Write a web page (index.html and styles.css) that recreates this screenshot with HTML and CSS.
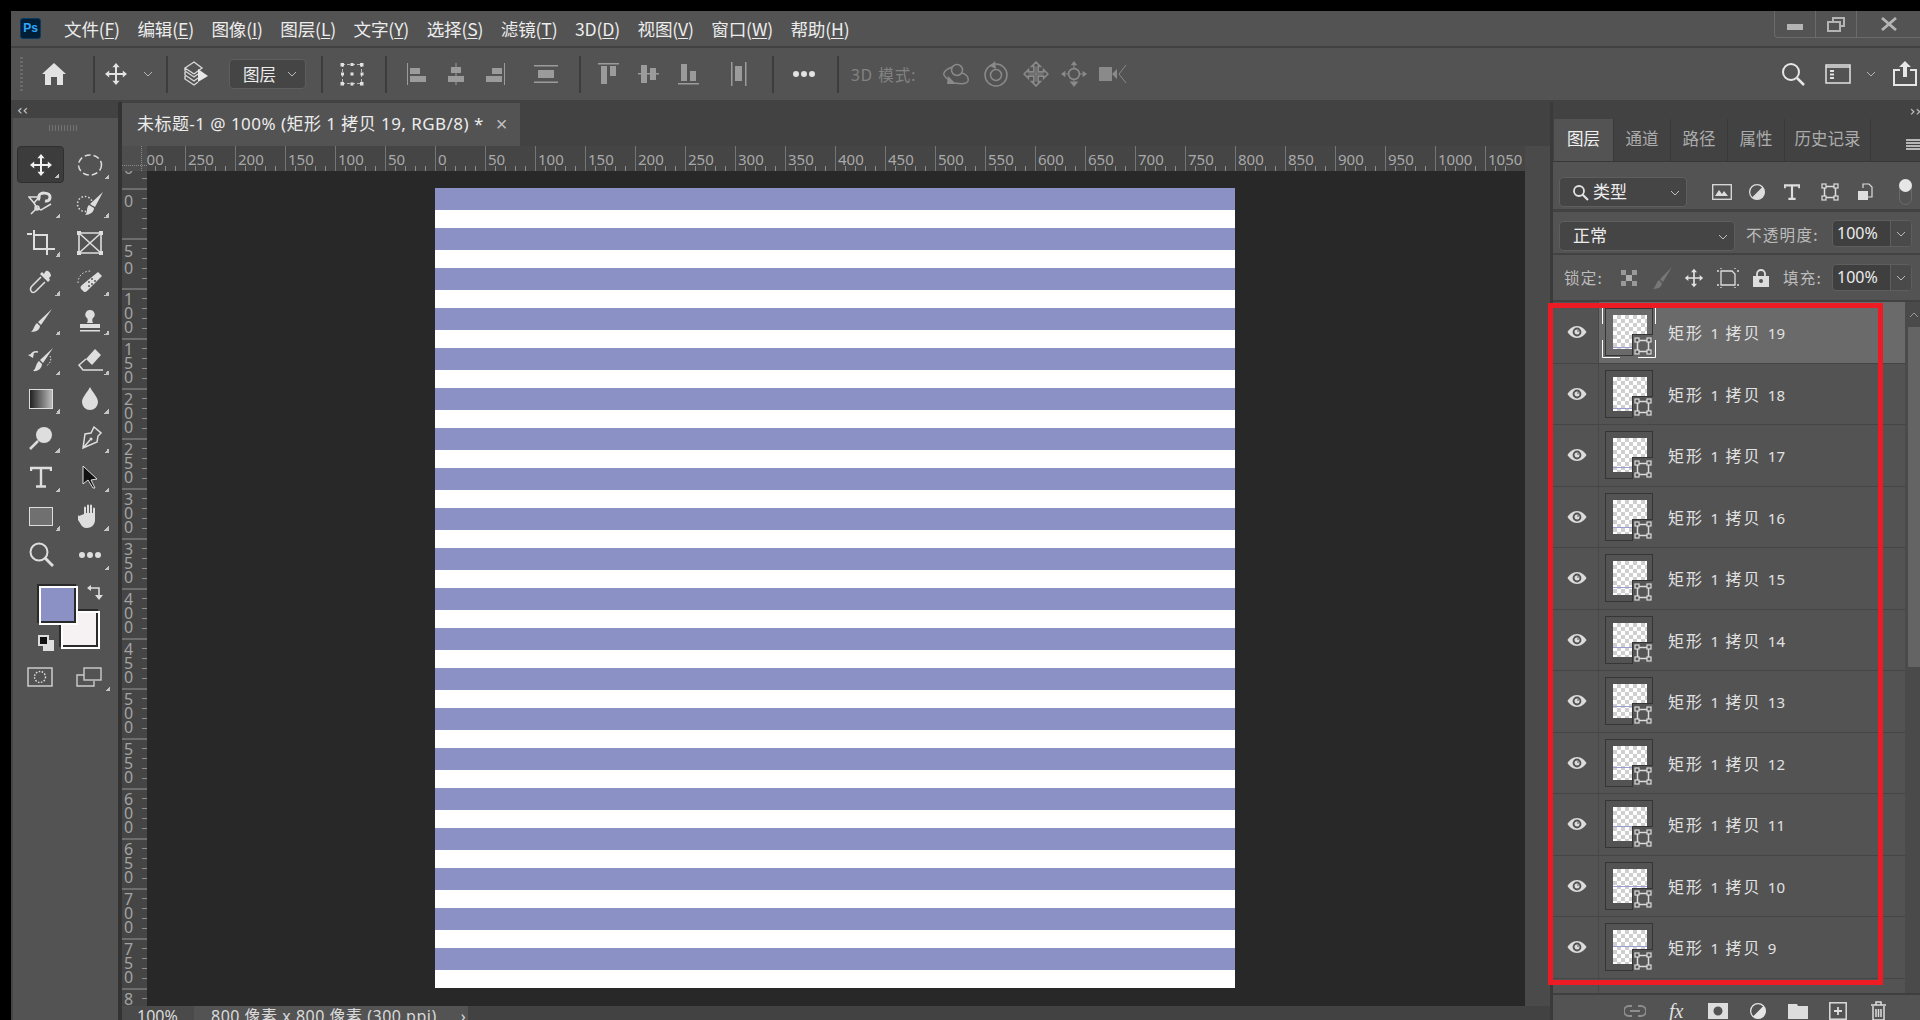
FILE: index.html
```html
<!DOCTYPE html>
<html lang="zh-CN">
<head>
<meta charset="utf-8">
<title>Photoshop</title>
<link rel="stylesheet" href="styles.css">
</head>
<body>
<svg class="defs" aria-hidden="true">
  <symbol id="move" viewBox="0 0 24 24"><path fill="currentColor" d="M12 1l3.6 4.2H13V11h5.8V8.4L23 12l-4.2 3.6V13H13v5.8h2.6L12 23l-3.6-4.2H11V13H5.2v2.6L1 12l4.2-3.6V11H11V5.2H8.4z"/></symbol>
  <symbol id="chev" viewBox="0 0 12 8"><path fill="none" stroke="currentColor" stroke-width="1" d="M2 2l4 4 4-4"/></symbol>
  <symbol id="eye" viewBox="0 0 20 14"><path fill="currentColor" fill-rule="evenodd" d="M10 1c4.500 0 8 3.500 9.500 6-1.500 2.500-5 6-9.500 6S2 9.500.5 7C2 4.500 5.500 1 10 1zm0 1.600a4.400 4.400 0 1 0 0 8.800 4.400 4.400 0 0 0 0-8.800zM10 4.500a2.500 2.500 0 1 1 0 5 2.500 2.500 0 0 1 0-5zm1 .8a.8.8 0 1 0 0 1.600.8.800 0 0 0 0-1.600z"/></symbol>
  <symbol id="shape" viewBox="0 0 18 18"><g fill="none" stroke="currentColor"><rect x="3.500" y="3.500" width="11" height="11" stroke-width="1.500"/><rect x="1" y="1" width="4" height="4" fill="#555" stroke-width="1.200"/><rect x="13" y="1" width="4" height="4" fill="#555" stroke-width="1.200"/><rect x="1" y="13" width="4" height="4" fill="#555" stroke-width="1.200"/><rect x="13" y="13" width="4" height="4" fill="#555" stroke-width="1.200"/></g></symbol>
  <symbol id="adjust" viewBox="0 0 20 20"><circle cx="10" cy="10" r="8.200" fill="none" stroke="currentColor" stroke-width="1.400"/><path fill="currentColor" d="M16 4.500A8 8 0 0 1 4.500 16z"/></symbol>
</svg>

<div class="app">
  <header class="menubar">
    <div class="logo">Ps</div>
    <nav class="menu">
      <span>文件(<u>F</u>)</span><span>编辑(<u>E</u>)</span><span>图像(<u>I</u>)</span><span>图层(<u>L</u>)</span><span>文字(<u>Y</u>)</span><span>选择(<u>S</u>)</span><span>滤镜(<u>T</u>)</span><span>3D(<u>D</u>)</span><span>视图(<u>V</u>)</span><span>窗口(<u>W</u>)</span><span>帮助(<u>H</u>)</span>
    </nav>
    <div class="winctl">
      <div class="wc wc-min"><svg width="16" height="6" viewBox="0 0 16 6"><rect y="0" width="16" height="6" fill="#b4b4b4"/></svg></div>
      <div class="wc wc-res"><svg width="18" height="15" viewBox="0 0 18 15"><path fill="none" stroke="#b4b4b4" stroke-width="2" d="M6 4V1h11v8h-4M1 5h12v9H1z"/></svg></div>
      <div class="wc wc-close"><svg width="16" height="14" viewBox="0 0 16 14"><path fill="none" stroke="#b4b4b4" stroke-width="2.800" d="M1 1l14 12M15 1L1 13"/></svg></div>
    </div>
  </header>

  <div class="optbar">
    <i class="grip"></i>
    <div class="ic m11"><svg width="26" height="24" viewBox="0 0 26 24"><path fill="#e2e2e2" d="M13 1l12 11h-3v11h-6v-8h-6v8H4V12H1z"/></svg></div>
    <i class="sep m19"></i>
    <div class="ic m1"><svg width="24" height="24"><use href="#move"/></svg></div>
    <div class="chev m4"><svg width="12" height="8"><use href="#chev"/></svg></div>
    <i class="sep m10"></i>
    <div class="ic m8"><svg width="26" height="26" viewBox="0 0 26 26"><g fill="none" stroke="#d8d8d8" stroke-width="1.400"><path d="M2 7l9-6 8 6-8 6zM2 7v3l9 6 4-3M2 11v3l9 6 4-3M2 15v3l9 6 4-3"/></g><path fill="#e8e8e8" d="M15 8l10 7-10 6z"/></svg></div>
    <div class="tselect m13"><span>图层</span><svg width="12" height="8"><use href="#chev"/></svg></div>
    <i class="sep m15"></i>
    <div class="ic m9"><svg width="26" height="26" viewBox="0 0 26 26"><path fill="none" stroke="#b8b8b8" stroke-dasharray="3 2" d="M3 3.500h20M3 22.500h20M3.500 3v20M22.500 3v20"/><g fill="#e2e2e2"><rect x="1.500" y="2" width="3.500" height="3.500"/><rect x="11.500" y="2" width="3" height="3"/><rect x="21" y="2" width="3.500" height="3.500"/><rect x="2" y="11.500" width="3" height="3"/><rect x="11.500" y="11.500" width="3" height="3"/><rect x="21.500" y="11.500" width="3" height="3"/><rect x="1.500" y="21" width="3.500" height="3.500"/><rect x="11.500" y="21.500" width="3" height="3"/><rect x="21" y="21" width="3.500" height="3.500"/></g></svg></div>
    <i class="sep m13"></i>
    <div class="ic off m9"><svg width="20" height="24" viewBox="0 0 20 24"><path fill="currentColor" d="M1 1h1v22H1zM4 6h10v6H4zM4 14h16v6H4z"/></svg></div>
    <div class="ic off"><svg width="20" height="24" viewBox="0 0 20 24"><path fill="currentColor" d="M9.500 1h1v22h-1zM5 5h10v6H5zM2 14h16v6H2z"/></svg></div>
    <div class="ic off"><svg width="20" height="24" viewBox="0 0 20 24"><path fill="currentColor" d="M18 1h1v22h-1zM6 6h10v6H6zM0 14h16v6H0z"/></svg></div>
    <div class="ic off m10"><svg width="26" height="20" viewBox="0 0 26 20"><path fill="currentColor" d="M1 1h24v1.500H1zM1 17.500h24V19H1zM5 6h16v8H5z"/></svg></div>
    <i class="sep m13"></i>
    <div class="ic off m8"><svg width="22" height="24" viewBox="0 0 22 24"><path fill="currentColor" d="M0 1h21v1.500H0zM3 4h6v18H3zM12 4h6v10h-6z"/></svg></div>
    <div class="ic off"><svg width="22" height="24" viewBox="0 0 22 24"><path fill="currentColor" d="M0 11h21v1.500H0zM3 3h6v18H3zM12 6h6v12h-6z"/></svg></div>
    <div class="ic off"><svg width="22" height="24" viewBox="0 0 22 24"><path fill="currentColor" d="M0 21h21v1.500H0zM3 2h6v17H3zM12 9h6v10h-6z"/></svg></div>
    <div class="ic off m10"><svg width="16" height="26" viewBox="0 0 16 26"><path fill="currentColor" d="M0 1h1.500v24H0zM14 1h1.500v24H14zM4 5h7v15H4z"/></svg></div>
    <i class="sep m13"></i>
    <div class="ic m10"><svg width="24" height="8" viewBox="0 0 24 8"><circle cx="4" cy="4" r="3" fill="#e2e2e2"/><circle cx="12" cy="4" r="3" fill="#e2e2e2"/><circle cx="20" cy="4" r="3" fill="#e2e2e2"/></svg></div>
    <i class="sep m13"></i>
    <div class="mode3d m12">3D 模式:</div>
    <div class="ic dim m15"><svg width="28" height="24" viewBox="0 0 28 24"><g fill="none" stroke="currentColor" stroke-width="1.500"><circle cx="15" cy="8" r="5.500"/><path d="M10 5C5 7 1 10 2 13c1 2 3 4 5 5M20 11c4 1 7 4 6 8-1 3-7 3-13 2"/></g><path fill="currentColor" d="M6 14l8 8H5z"/></svg></div>
    <div class="ic dim"><svg width="26" height="26" viewBox="0 0 26 26"><g fill="none" stroke="currentColor" stroke-width="1.500"><circle cx="13" cy="14" r="11"/><circle cx="13" cy="14" r="5.500"/></g><path fill="currentColor" d="M12 0l-5 5 6 3z"/></svg></div>
    <div class="ic dim"><svg width="26" height="26" viewBox="0 0 24 24"><path fill="none" stroke="currentColor" stroke-width="1.500" d="M12 1l4 4h-2v5h5V8l4 4-4 4v-2h-5v5h2l-4 4-4-4h2v-5H5v2l-4-4 4-4v2h5V5H8z"/><path fill="none" stroke="currentColor" d="M12 5v14M5 12h14"/></svg></div>
    <div class="ic dim nudge2"><svg width="26" height="26" viewBox="0 0 24 24"><path fill="currentColor" d="M12 0l3 4H9zM12 24l-4-5h8zM0 12l4-3v6zM24 12l-4-3v6z"/><circle cx="12" cy="12" r="5" fill="none" stroke="currentColor" stroke-width="1.500"/><path fill="none" stroke="currentColor" d="M12 4v3M12 17v2M4 12h3M17 12h3"/></svg></div>
    <div class="ic dim nudge1"><svg width="28" height="22" viewBox="0 0 28 22"><path fill="currentColor" d="M0 4h13v14H0zM13 11l5-5v10z"/><path fill="none" stroke="currentColor" d="M27 2l-7 9 7 9"/></svg></div>
    <div class="optright">
      <div class="ic"><svg width="24" height="24" viewBox="0 0 24 24"><circle cx="10" cy="10" r="8" fill="none" stroke="#e6e6e6" stroke-width="2"/><path stroke="#e6e6e6" stroke-width="2.500" d="M16 16l7 7"/></svg></div>
      <div class="ic m5"><svg width="26" height="20" viewBox="0 0 26 20"><rect x="1" y="1" width="24" height="18" fill="none" stroke="#e2e2e2" stroke-width="1.500"/><path stroke="#e2e2e2" stroke-width="1.500" d="M1 3h24"/><path fill="#e2e2e2" d="M5 6h4v2H5zM5 9.500h4v2H5zM5 13h4v2H5z"/></svg></div>
      <div class="chev m5"><svg width="12" height="8"><use href="#chev"/></svg></div>
      <div class="ic m6"><svg width="26" height="26" viewBox="0 0 26 26"><path fill="none" stroke="#e6e6e6" stroke-width="2" d="M8 9H2v15h22V9h-6"/><path fill="#e6e6e6" d="M13 0l6 6h-4v10h-4V6H7z"/></svg></div>
    </div>
  </div>

  <main class="main">
    <aside class="toolbox">
      <div class="strip"><span class="arrows">‹‹</span></div>
      <div class="tgrip"></div>
      <div class="tools">
        <div class="tool active more"><svg width="24" height="24"><use href="#move"/></svg></div>
        <div class="tool more"><svg width="26" height="24" viewBox="0 0 26 24"><ellipse cx="13" cy="12" rx="11.500" ry="10" fill="none" stroke="currentColor" stroke-width="1.500" stroke-dasharray="6 3"/></svg></div>

        <div class="tool more"><svg width="26" height="26" viewBox="0 0 26 26"><g fill="none" stroke="currentColor" stroke-width="1.500"><path d="M1 6h10L6 12zM6 12l3 5M3 23l6-6 4 2 10-6"/><circle cx="9" cy="17" r="2"/><path stroke-width="3" d="M12 8h-1V5c0-4 11-4 11 1 0 5-5 4-5 4"/></g></svg></div>
        <div class="tool more"><svg width="28" height="26" viewBox="0 0 28 26"><circle cx="9" cy="13" r="7.500" fill="none" stroke="currentColor" stroke-width="1.500" stroke-dasharray="1.500 2"/><path fill="currentColor" d="M27 1l-8 15-5-3zM13 14l5 3c0 4-4 7-9 7 3-2 1-8 4-10z"/></svg></div>

        <div class="tool more"><svg width="28" height="26" viewBox="0 0 28 26"><path fill="none" stroke="currentColor" stroke-width="2" d="M0 4h5M7 0v19h18M6 5h14v20M22 19h6"/></svg></div>
        <div class="tool"><svg width="26" height="24" viewBox="0 0 26 24"><path fill="none" stroke="currentColor" stroke-width="1.600" d="M2 2h22v20H2zM2 2l22 20M24 2L2 22"/><g fill="currentColor"><rect width="4" height="4"/><rect x="22" width="4" height="4"/><rect y="20" width="4" height="4"/><rect x="22" y="20" width="4" height="4"/></g></svg></div>

        <div class="tool more"><svg width="24" height="24" viewBox="0 0 24 24"><path fill="currentColor" d="M16 2l1-1c2-1 5 2 5 5l-1 1-1 1 1 2-2 2-8-8 2-2 2 2z"/><path fill="none" stroke="currentColor" stroke-width="1.600" d="M12 7l-9 9c-2 2-2 3-1 5s3 2 5 0l9-9"/></svg></div>
        <div class="tool more"><svg width="26" height="26" viewBox="0 0 26 26"><path fill="currentColor" d="M21 3l4 4L10 22c-2 2-3 1-5-1s-2-3 0-5z"/><g fill="#555"><circle cx="12" cy="13" r="1"/><circle cx="15" cy="10" r="1"/><circle cx="15" cy="15" r="1"/><circle cx="18" cy="12" r="1"/><circle cx="12" cy="17" r="1"/></g><path fill="none" stroke="currentColor" stroke-dasharray="1.500 2" d="M1 14C1 7 6 2 14 2"/></svg></div>

        <div class="tool more"><svg width="24" height="26" viewBox="0 0 24 26"><path fill="currentColor" d="M23 1L12 17l-3-3zM8 15l3 3c0 3-3 6-9 6 3-2 3-7 6-9z"/></svg></div>
        <div class="tool more"><svg width="24" height="24" viewBox="0 0 24 24"><path fill="currentColor" d="M12 1a4.500 4.500 0 0 1 3 8c-1 1-1 3 0 5h-6c1-2 1-4 0-5a4.500 4.500 0 0 1 3-8zM2 15h20v4H2zM2 21h20v1.500H2z"/></svg></div>

        <div class="tool more"><svg width="26" height="26" viewBox="0 0 26 26"><path fill="currentColor" d="M25 1L15 16l-3-3zM11 14l3 3c0 4-4 8-9 7 3-2 3-8 6-10z"/><path fill="none" stroke="currentColor" stroke-width="1.300" d="M10 5C6 4 4 6 3 8"/><path fill="currentColor" d="M0 8l6-2-1 5z"/><path fill="none" stroke="currentColor" stroke-dasharray="1.500 1.500" d="M22 9c2 4 0 8-4 10"/></svg></div>
        <div class="tool more"><svg width="26" height="24" viewBox="0 0 26 24"><path fill="currentColor" d="M18 1l6 6-9 10-6-6z"/><path fill="none" stroke="currentColor" stroke-width="1.500" d="M9 11L2 17l4 5h8l-.5-.5M14 22h12"/></svg></div>

        <div class="tool more"><div class="gradrect"></div></div>
        <div class="tool more"><svg width="18" height="24" viewBox="0 0 18 24"><path fill="currentColor" d="M9 0c3 6 8 10 8 15a8 8 0 0 1-16 0C1 10 6 6 9 0z"/></svg></div>

        <div class="tool more"><svg width="26" height="24" viewBox="0 0 26 24"><circle cx="16" cy="9" r="8" fill="currentColor"/><path stroke="currentColor" stroke-width="2.500" d="M10 15L2 23"/></svg></div>
        <div class="tool more"><svg width="24" height="24" viewBox="0 0 24 24"><path fill="none" stroke="currentColor" stroke-width="1.500" d="M16 1l7 6-3 3-1 6-14 6L7 8l6-1zM5 22l7-8"/><circle cx="13" cy="13" r="1.500" fill="currentColor"/></svg></div>

        <div class="tool more"><svg width="22" height="22" viewBox="0 0 22 22"><path fill="none" stroke="currentColor" stroke-width="2.400" d="M1 5V2h20v3M11 2v18M6 20.500h10"/></svg></div>
        <div class="tool more"><svg width="18" height="24" viewBox="0 0 18 24"><path fill="#111" stroke="#ddd" stroke-width="1" d="M2 1l14 13-6 1 4 8-2 0-5-8-5 4z"/></svg></div>

        <div class="tool more"><div class="rect-ic"></div></div>
        <div class="tool more"><svg width="24" height="26" viewBox="0 0 24 26"><path fill="currentColor" d="M6 11V5c0-2 2-2 2 0v5h1V3c0-2 2-2 2 0v7h1V3c0-2 2-2 2 0v7h1V6c0-2 2-2 2 0v11c0 5-4 8-8 8-3 0-5-1-7-5l-4-6c-1-2 1-3 3-1z"/></svg></div>

        <div class="tool"><svg width="26" height="26" viewBox="0 0 26 26"><circle cx="11" cy="10" r="8.500" fill="none" stroke="currentColor" stroke-width="2"/><path stroke="currentColor" stroke-width="3" d="M17 16l8 8"/></svg></div>
        <div class="tool more"><svg width="24" height="8" viewBox="0 0 24 8"><circle cx="4" cy="4" r="3" fill="currentColor"/><circle cx="12" cy="4" r="3" fill="currentColor"/><circle cx="20" cy="4" r="3" fill="currentColor"/></svg></div>
      </div>
      <div class="colors">
        <div class="swatch bg"></div>
        <div class="swatch fg"></div>
        <svg class="swap" width="16" height="16" viewBox="0 0 16 16"><path fill="none" stroke="#ddd" stroke-width="1.600" d="M3 3h9v9"/><path fill="#ddd" d="M0 3l4-3v6zM8 10h8l-4 5z"/></svg>
        <div class="mini"><div class="mini-w"></div><div class="mini-b"></div></div>
      </div>
      <div class="modes">
        <svg width="26" height="20" viewBox="0 0 26 20"><rect x="1" y="1" width="24" height="18" fill="none" stroke="#ccc" stroke-width="1.500"/><circle cx="13" cy="10" r="5.500" fill="none" stroke="#ddd" stroke-width="1.400" stroke-dasharray="1.500 1.500"/></svg>
        <div class="tool-m more"><svg width="26" height="20" viewBox="0 0 26 20"><g fill="none" stroke="#ccc" stroke-width="1.400"><path d="M8 8H1v11h17v-5"/><rect x="8" y="1" width="17" height="12"/></g></svg></div>
      </div>
    </aside>

    <section class="doc">
      <div class="tabs">
        <div class="tab"><span>未标题-1 @ 100% (矩形 1 拷贝 19, RGB/8) *</span><b class="x">×</b></div>
      </div>
      <div class="hruler-row">
        <div class="corner"></div>
        <div class="hruler">
          <span>300</span><span>250</span><span>200</span><span>150</span><span>100</span><span>50</span><span>0</span><span>50</span><span>100</span><span>150</span><span>200</span><span>250</span><span>300</span><span>350</span><span>400</span><span>450</span><span>500</span><span>550</span><span>600</span><span>650</span><span>700</span><span>750</span><span>800</span><span>850</span><span>900</span><span>950</span><span>1000</span><span>1050</span>
        </div>
        <div class="vscroll-head"></div>
      </div>
      <div class="work">
        <div class="vruler">
          <span class="d2">50</span><span class="d2">0</span><span class="d2">50</span><span>100</span><span>150</span><span>200</span><span>250</span><span>300</span><span>350</span><span>400</span><span>450</span><span>500</span><span>550</span><span>600</span><span>650</span><span>700</span><span>750</span><span>800</span>
        </div>
        <div class="pasteboard"><div class="canvas"></div></div>
        <div class="vscroll"></div>
      </div>
      <footer class="status">
        <span class="zoom">100%</span>
        <span class="info">800 像素 x 800 像素 (300 ppi)<em>›</em></span>
      </footer>
    </section>

    <i class="vdivider"></i>

    <section class="panel">
      <div class="pstrip"><span class="arrows">››</span></div>
      <div class="ptabs">
        <div class="ptab on">图层</div><div class="ptab w57">通道</div><div class="ptab w57">路径</div><div class="ptab w57">属性</div><div class="ptab w86">历史记录</div>
        <div class="pmenu"><svg width="14" height="12" viewBox="0 0 14 12"><path stroke="#ddd" stroke-width="1.500" d="M0 1h14M0 4h14M0 7h14M0 10h14"/></svg></div>
      </div>
      <div class="filter">
        <div class="drop fsel"><svg width="17" height="17" viewBox="0 0 17 17"><circle cx="7" cy="7" r="5" fill="none" stroke="#e2e2e2" stroke-width="1.800"/><path stroke="#e2e2e2" stroke-width="2.200" d="M10.500 10.500l5.500 5.500"/></svg><span>类型</span><svg class="dchev" width="12" height="8"><use href="#chev"/></svg></div>
        <div class="ficons">
          <svg width="20" height="16" viewBox="0 0 20 16"><rect x=".7" y=".7" width="18.600" height="14.600" fill="none" stroke="#ddd" stroke-width="1.300"/><path fill="#ddd" d="M3 12l4-6 3 4 2-3 4 5z"/></svg>
          <svg width="18" height="18"><use href="#adjust"/></svg>
          <svg width="16" height="16" viewBox="0 0 22 22"><path fill="none" stroke="#ddd" stroke-width="3" d="M1 6V2h20v4M11 2v18M6 20.500h10"/></svg>
          <svg width="18" height="18"><use href="#shape"/></svg>
          <svg width="16" height="18" viewBox="0 0 16 18"><path fill="none" stroke="#ddd" stroke-width="1.200" d="M6 5V1h6l3 3v10h-4"/><path fill="#ddd" d="M1 8h10v9H1z"/></svg>
          <div class="toggle"><i></i></div>
        </div>
      </div>
      <div class="blend">
        <div class="drop bsel"><span>正常</span><svg class="dchev" width="12" height="8"><use href="#chev"/></svg></div>
        <span class="lab">不透明度:</span>
        <div class="num"><span>100%</span><div class="numc"><svg width="12" height="8"><use href="#chev"/></svg></div></div>
      </div>
      <div class="lockrow">
        <span class="lab lockl">锁定:</span>
        <div class="locks">
          <svg class="lk1" width="16" height="16" viewBox="0 0 16 16"><path fill="#999" d="M0 0h16v16H0z"/><path fill="#555" d="M5 0h6v5H5zM0 5h5v6H0zM11 5h5v6h-5zM5 11h6v5H5z"/><path fill="#ccc" d="M5 5h6v6H5z" opacity=".4"/></svg>
          <svg class="lk2" width="20" height="22" viewBox="0 0 20 22"><path fill="#777" d="M19 0L10 15l-3-3zM6 13l3 3c0 3-3 6-9 6 3-2 3-7 6-9z"/></svg>
          <svg class="lk3" width="20" height="20"><use href="#move"/></svg>
          <svg class="lk4" width="22" height="20" viewBox="0 0 22 20"><path fill="none" stroke="#ddd" stroke-width="1.300" d="M4 3h11l3 3v11H4zM0 3h2M4 0v1M18 0v1M20 3h2M0 17h2M4 19v1M18 19v1M20 17h2"/></svg>
          <svg class="lk5" width="16" height="18" viewBox="0 0 16 18"><path fill="none" stroke="#ddd" stroke-width="1.800" d="M4 7V5a4 4 0 0 1 8 0v2"/><path fill="#ddd" fill-rule="evenodd" d="M0 7h16v11H0zM8 10a2 2 0 1 0 0 4 2 2 0 0 0 0-4z"/></svg>
        </div>
        <span class="lab fill">填充:</span>
        <div class="num"><span>100%</span><div class="numc"><svg width="12" height="8"><use href="#chev"/></svg></div></div>
      </div>
      <div class="layerbox">
        <div class="rows">
          <div class="row sel"><div class="eye"><svg width="20" height="14"><use href="#eye"/></svg></div><div class="thumb"><svg class="marks" width="54" height="52" viewBox="0 0 54 52"><path fill="none" stroke="#fff" d="M.5 18V.500H18M36 .500h17.500V18M.5 34v17.500H18M36 51.500h17.500V34"/></svg><div class="check"><i class="line" style="top:32px"></i></div><span class="badge"><svg width="18" height="18"><use href="#shape"/></svg></span></div><div class="name"><span class="cn">矩形</span> 1 <span class="cn">拷贝</span> 19</div></div>
          <div class="row"><div class="eye"><svg width="20" height="14"><use href="#eye"/></svg></div><div class="thumb"><div class="check"><i class="line" style="top:31px"></i></div><span class="badge"><svg width="18" height="18"><use href="#shape"/></svg></span></div><div class="name"><span class="cn">矩形</span> 1 <span class="cn">拷贝</span> 18</div></div>
          <div class="row"><div class="eye"><svg width="20" height="14"><use href="#eye"/></svg></div><div class="thumb"><div class="check"><i class="line" style="top:29px"></i></div><span class="badge"><svg width="18" height="18"><use href="#shape"/></svg></span></div><div class="name"><span class="cn">矩形</span> 1 <span class="cn">拷贝</span> 17</div></div>
          <div class="row"><div class="eye"><svg width="20" height="14"><use href="#eye"/></svg></div><div class="thumb"><div class="check"><i class="line" style="top:27px"></i></div><span class="badge"><svg width="18" height="18"><use href="#shape"/></svg></span></div><div class="name"><span class="cn">矩形</span> 1 <span class="cn">拷贝</span> 16</div></div>
          <div class="row"><div class="eye"><svg width="20" height="14"><use href="#eye"/></svg></div><div class="thumb"><div class="check"><i class="line" style="top:26px"></i></div><span class="badge"><svg width="18" height="18"><use href="#shape"/></svg></span></div><div class="name"><span class="cn">矩形</span> 1 <span class="cn">拷贝</span> 15</div></div>
          <div class="row"><div class="eye"><svg width="20" height="14"><use href="#eye"/></svg></div><div class="thumb"><div class="check"><i class="line" style="top:24px"></i></div><span class="badge"><svg width="18" height="18"><use href="#shape"/></svg></span></div><div class="name"><span class="cn">矩形</span> 1 <span class="cn">拷贝</span> 14</div></div>
          <div class="row"><div class="eye"><svg width="20" height="14"><use href="#eye"/></svg></div><div class="thumb"><div class="check"><i class="line" style="top:22px"></i></div><span class="badge"><svg width="18" height="18"><use href="#shape"/></svg></span></div><div class="name"><span class="cn">矩形</span> 1 <span class="cn">拷贝</span> 13</div></div>
          <div class="row"><div class="eye"><svg width="20" height="14"><use href="#eye"/></svg></div><div class="thumb"><div class="check"><i class="line" style="top:21px"></i></div><span class="badge"><svg width="18" height="18"><use href="#shape"/></svg></span></div><div class="name"><span class="cn">矩形</span> 1 <span class="cn">拷贝</span> 12</div></div>
          <div class="row"><div class="eye"><svg width="20" height="14"><use href="#eye"/></svg></div><div class="thumb"><div class="check"><i class="line" style="top:19px"></i></div><span class="badge"><svg width="18" height="18"><use href="#shape"/></svg></span></div><div class="name"><span class="cn">矩形</span> 1 <span class="cn">拷贝</span> 11</div></div>
          <div class="row"><div class="eye"><svg width="20" height="14"><use href="#eye"/></svg></div><div class="thumb"><div class="check"><i class="line" style="top:17px"></i></div><span class="badge"><svg width="18" height="18"><use href="#shape"/></svg></span></div><div class="name"><span class="cn">矩形</span> 1 <span class="cn">拷贝</span> 10</div></div>
          <div class="row"><div class="eye"><svg width="20" height="14"><use href="#eye"/></svg></div><div class="thumb"><div class="check"><i class="line" style="top:16px"></i></div><span class="badge"><svg width="18" height="18"><use href="#shape"/></svg></span></div><div class="name"><span class="cn">矩形</span> 1 <span class="cn">拷贝</span> 9</div></div>
          <div class="row"><div class="eye"></div><div class="thumb"></div></div>
        </div>
        <div class="pscroll"><div class="pup"><svg width="12" height="8" viewBox="0 0 12 8"><path fill="none" stroke="#999" d="M2 6l4-4 4 4"/></svg></div><div class="pthumb"></div></div>
      </div>
      <div class="pfoot">
        <svg width="22" height="12" viewBox="0 0 22 12"><g fill="none" stroke="#8e8e8e" stroke-width="1.800"><path d="M8 1H5a5 5 0 0 0 0 10h3M14 1h3a5 5 0 0 1 0 10h-3M6 6h10"/></g></svg>
        <span class="fx">fx</span>
        <svg width="20" height="16" viewBox="0 0 20 16"><path fill="#ddd" fill-rule="evenodd" d="M0 0h20v16H0zM10 3.500a4.500 4.500 0 1 0 0 9 4.500 4.500 0 0 0 0-9z"/></svg>
        <svg width="18" height="18"><use href="#adjust"/></svg>
        <svg width="20" height="16" viewBox="0 0 20 16"><path fill="#ddd" d="M0 1h9l1 2h10v13H0z"/></svg>
        <svg width="18" height="18" viewBox="0 0 18 18"><rect x=".8" y=".8" width="16.400" height="16.400" fill="none" stroke="#ddd" stroke-width="1.500"/><path stroke="#ddd" stroke-width="1.800" d="M9 5v8M5 9h8"/></svg>
        <svg class="trash" width="17" height="20" viewBox="0 0 17 20"><path fill="none" stroke="#ddd" stroke-width="1.500" d="M3 5v14h11V5M1 4h15M6 4V1h5v3M6 8v8M8.500 8v8M11 8v8"/></svg>
      </div>
    </section>

    <div class="redbox"></div>
  </main>
</div>
</body>
</html>
```
FILE: styles.css
```css
* { box-sizing: border-box; }
html, body { margin: 0; padding: 0; height: 100%; overflow: hidden; background: #000; }
body { font-family: "Noto Sans", "Noto Sans CJK SC", sans-serif; color: #e6e6e6; }
svg { display: block; flex: none; }
.defs { width: 0; height: 0; position: absolute; }
i, em { font-style: normal; }

.app { margin: 11px 0 0 11px; width: 1909px; height: 1009px; display: flex; flex-direction: column; background: #535353; }

/* menu */
.menubar { height: 37px; flex: none; display: flex; align-items: flex-start; background: #535353; border-bottom: 2px solid #414141; }
.logo { width: 21px; height: 21px; margin: 7px 0 0 9px; border-radius: 3px; background: #001e36; border: 1px solid #0a3a60; color: #31a8ff; font: bold 12px/18px "Liberation Sans", sans-serif; text-align: center; }
.menu { display: flex; gap: 17.600px; margin: 0 0 0 23px; height: 34px; align-items: center; font-size: 17.600px; font-family: "Noto Sans CJK SC", sans-serif; color: #ececec; white-space: nowrap; }
.menu span { letter-spacing: -.2px; }
.menu u { text-underline-offset: 2px; }
.winctl { margin-left: auto; display: flex; height: 27px; border-left: 1px solid #6b6b6b; border-bottom: 1px solid #6b6b6b; border-bottom-left-radius: 4px; }
.wc { display: flex; align-items: center; justify-content: center; height: 100%; }
.wc-min { width: 41px; border-right: 1px solid #6b6b6b; }
.wc-res { width: 41px; border-right: 1px solid #6b6b6b; }
.wc-close { width: 63px; }
.wc-min svg { margin-top: 6px; }

/* options */
.optbar { height: 54px; flex: none; display: flex; align-items: center; padding-left: 9px; border-bottom: 2px solid #424242; background: #535353; color: #e2e2e2; }
.grip { width: 3px; height: 34px; background: repeating-linear-gradient(#6a6a6a 0 2px, transparent 2px 4px); }
.sep { width: 2px; height: 37px; background: #3d3d3d; flex: none; }
.ic { width: 40px; height: 40px; display: flex; align-items: center; justify-content: center; flex: none; }
.ic.off { color: #9b9b9b; }
.ic.dim { color: #8a8a8a; }
.chev { width: 16px; display: flex; justify-content: center; color: #b5b5b5; flex: none; }
.m1 { margin-left: 1px; } .m4 { margin-left: 4px; } .m5 { margin-left: 5px; } .m6 { margin-left: 6px; }
.m8 { margin-left: 8px; } .m9 { margin-left: 9px; } .m10 { margin-left: 10px; } .m11 { margin-left: 11px; }
.m12 { margin-left: 12px; } .m13 { margin-left: 13px; } .m15 { margin-left: 15px; } .m19 { margin-left: 19px; }
.nudge2 { margin-left: -2px; } .nudge1 { margin-left: -1px; }
.tselect { width: 77px; height: 30px; background: #454545; border: 1px solid #5e5e5e; border-radius: 4px; display: flex; align-items: center; padding-left: 13px; gap: 10px; font: 16.500px "Noto Sans CJK SC", sans-serif; color: #ececec; flex: none; }
.tselect svg { color: #bbb; }
.mode3d { width: 70px; font: 15.500px "Noto Sans", "Noto Sans CJK SC", sans-serif; letter-spacing: 1px; color: #838383; white-space: nowrap; flex: none; }
.optright { margin-left: auto; display: flex; align-items: center; width: 147px; flex: none; overflow: hidden; }

/* main */
.main { flex: 1; min-height: 0; display: flex; position: relative; background: #333; overflow: hidden; }

/* toolbox */
.toolbox { width: 107px; flex: none; background: #535353; border-left: 2px solid #454545; margin-right: 4px; }
.strip { height: 16px; background: #424242; display: flex; align-items: center; padding-left: 6px; margin-left: -2px; }
.arrows { font: 14px/16px "DejaVu Sans", sans-serif; color: #cfcfcf; }
.tgrip { height: 28px; background: repeating-linear-gradient(90deg, #727272 0 1px, transparent 1px 3px) 36px 7px / 29px 6px no-repeat; }
.tools { display: grid; grid-template-columns: 47px 47px; column-gap: 2px; grid-auto-rows: 37.100px; row-gap: 2px; padding-left: 4px; color: #dedede; }
.tool { position: relative; display: flex; align-items: center; justify-content: center; }
.tool.active { background: #3c3c3c; border: 1px solid #2f2f2f; border-radius: 4px; color: #f0f0f0; }
.more::after { content: ""; position: absolute; right: 4px; bottom: 4px; width: 5px; height: 5px; background: linear-gradient(135deg, transparent 50%, #c4c4c4 50%); }
.gradrect { width: 24px; height: 20px; border: 1.500px solid #ddd; background: linear-gradient(90deg, #222, #bbb); }
.rect-ic { width: 24px; height: 19px; border: 1.500px solid #ddd; background: #707070; }
.colors { position: relative; height: 74px; margin-top: 10px; }
.swatch { position: absolute; border: 2px solid #2a2a2a; }
.swatch::before { content: ""; display: block; width: 100%; height: 100%; border: 2px solid #fff; }
.fg { left: 24px; top: 0; width: 39px; height: 39px; background: #8b91c4; }
.bg { left: 46px; top: 25px; width: 39px; height: 38px; background: #f6f2f3; }
.swap { position: absolute; left: 74px; top: 1px; }
.mini { position: absolute; left: 25px; top: 51px; width: 16px; height: 16px; }
.mini-w { position: absolute; right: 0; bottom: 0; width: 11px; height: 11px; background: #ddd; }
.mini-b { position: absolute; left: 0; top: 0; width: 11px; height: 11px; background: #111; border: 2px solid #ddd; }
.modes { display: flex; align-items: center; margin-top: 5px; padding-left: 14px; gap: 23px; }
.tool-m { position: relative; width: 36px; height: 28px; display: flex; align-items: center; }
.tool-m::after { right: 2px; bottom: 0; }

/* doc */
.doc { width: 1428px; flex: none; display: flex; flex-direction: column; background: #424242; }
.tabs { height: 44px; flex: none; background: #424242; }
.tab { width: 398px; height: 43px; margin-top: 1px; background: #535353; display: flex; align-items: center; padding: 0 0 4px 15px; font: 17px "Noto Sans", "Noto Sans CJK SC", sans-serif; color: #ececec; white-space: nowrap; }
.tab span { letter-spacing: .45px; }
.x { font: 20px "Liberation Sans", sans-serif; color: #c0c0c0; margin: 4px 0 0 12px; }
.hruler-row { height: 25px; flex: none; display: flex; }
.corner { width: 25px; flex: none; background: repeating-linear-gradient(90deg, #8a8a8a 0 1px, transparent 1px 2px) 0 19px / 100% 1px no-repeat, repeating-linear-gradient(180deg, #8a8a8a 0 1px, transparent 1px 2px) 19px 0 / 1px 100% no-repeat, #4e4e4e; }
.hruler { width: 1378px; flex: none; display: flex; overflow: hidden; background: #454545 repeating-linear-gradient(90deg, #8c8c8c 0 1px, transparent 1px 10px) -12px bottom / 100% 5px no-repeat; }
.hruler span { width: 50px; flex: none; border-left: 1px solid #757575; font-size: 15px; line-height: 27px; color: #a9a9a9; padding-left: 2px; white-space: nowrap; }
.hruler span:first-child { margin-left: -12px; }
.vscroll-head { flex: 1; background: #4a4a4a; }
.work { flex: 1; min-height: 0; display: flex; }
.vruler { width: 25px; flex: none; overflow: hidden; display: flex; flex-direction: column; background: #454545 repeating-linear-gradient(180deg, #8c8c8c 0 1px, transparent 1px 10px) right 7px / 5px 100% no-repeat; }
.vruler span { height: 50px; flex: none; width: 25px; border-top: 2px solid #6d6d6d; font-size: 16px; line-height: 13.800px; color: #a3a3a3; padding: 3px 12px 0 2px; word-break: break-all; }
.vruler .d2 { line-height: 17px; }
.vruler span:first-child { margin-top: -33px; }
.pasteboard { flex: 1; background: #282828; padding: 17px 0 0 288px; overflow: hidden; }
.canvas { width: 800px; height: 800px; background: repeating-linear-gradient(180deg, #8b91c4 0 22px, #fff 22px 40px); }
.vscroll { width: 25px; flex: none; background: #4a4a4a; }
.status { height: 14px; flex: none; display: flex; overflow: hidden; font: 16px/20px "Noto Sans", "Noto Sans CJK SC", sans-serif; color: #dadada; background: #424242; }
.zoom { width: 72px; padding-left: 15px; background: #4a4a4a; }
.info { width: 274px; background: #535353; padding-left: 17px; white-space: nowrap; letter-spacing: .5px; }
.info em { margin-left: 24px; }

.vdivider { width: 3px; flex: none; background: #3a3a3a; }

/* panel */
.panel { width: 367px; flex: none; background: #535353; display: flex; flex-direction: column; position: relative; }
.pstrip { height: 17px; flex: none; background: #424242; display: flex; justify-content: flex-end; align-items: center; }
.pstrip .arrows { margin-right: -1px; }
.ptabs { height: 43px; flex: none; display: flex; background: #424242; border-bottom: 1px solid #383838; font: 16.500px "Noto Sans CJK SC", sans-serif; color: #acacac; }
.ptab { display: flex; align-items: center; justify-content: center; border-right: 1px solid #383838; padding-bottom: 5px; }
.ptab.on { width: 60px; margin-left: 1px; background: #535353; color: #f0f0f0; }
.w57 { width: 57px; } .w86 { width: 86px; }
.pmenu { margin-left: auto; display: flex; align-items: center; margin-top: 10px; width: 14px; }
.filter { height: 50px; flex: none; display: flex; align-items: center; padding: 13px 0 0 6px; border-bottom: 3px solid #424242; }
.drop { height: 30px; background: #454545; border: 1px solid #5e5e5e; border-radius: 4px; display: flex; align-items: center; position: relative; font: 17px "Noto Sans CJK SC", sans-serif; color: #ececec; flex: none; }
.drop span { margin-top: -3px; }
.dchev { position: absolute; right: 5px; top: 11px; color: #c0c0c0; }
.fsel { width: 128px; padding-left: 12px; gap: 4px; }
.ficons { display: flex; align-items: center; margin-left: 25px; position: relative; width: 210px; }
.ficons svg { color: #ddd; }
.ficons > :nth-child(2) { margin-left: 16px; }
.ficons > :nth-child(3) { margin-left: 18px; }
.ficons > :nth-child(4) { margin-left: 21px; }
.ficons > :nth-child(5) { margin-left: 18px; }
.toggle { width: 13px; height: 26px; margin-left: 26px; border: 1px solid #6b6b6b; border-radius: 7px; position: relative; }
.toggle i { position: absolute; left: -1px; top: -1px; width: 13px; height: 13px; border-radius: 50%; background: #e6e6e6; }
.blend { height: 43px; flex: none; display: flex; align-items: center; padding: 6px 0 0 6px; border-bottom: 2px solid #424242; }
.bsel { width: 176px; padding-left: 13px; }
.lab { font: 15.500px "Noto Sans CJK SC", sans-serif; letter-spacing: 1.300px; color: #bdbdbd; white-space: nowrap; flex: none; }
.blend .lab { margin: -3px 0 0 11px; width: 77px; }
.blend .num { margin-bottom: 4px; }
.num { width: 80px; height: 27px; display: flex; background: #3f3f3f; border: 1px solid #5e5e5e; border-radius: 4px; margin-left: 9px; font-size: 16px; line-height: 25px; color: #ececec; flex: none; }
.num span { width: 57px; padding-left: 4px; }
.numc { flex: 1; border-left: 1px solid #5e5e5e; background: #4a4a4a; display: flex; align-items: center; justify-content: center; color: #bbb; border-radius: 0 4px 4px 0; }
.lockrow { height: 47px; flex: none; display: flex; align-items: center; padding-left: 11px; border-bottom: 2px solid #424242; }
.locks { display: flex; align-items: center; width: 175px; flex: none; }
.lk1 { margin-left: 13px; } .lk2 { margin-left: 16px; } .lk3 { margin-left: 11px; color: #e2e2e2; } .lk4 { margin-left: 13px; } .lk5 { margin-left: 14px; }
.lockl { width: 44px; margin-top: -2px; }
.fill { width: 44px; margin-top: -2px; }
.lockrow .num { margin-left: 5px; }
.layerbox { height: 691px; flex: none; display: flex; overflow: hidden; }
.rows { width: 352px; flex: none; }
.row { height: 61.500px; display: flex; align-items: center; border-bottom: 1.500px solid #454545; }
.row.sel { background: #6a6a6a; }
.eye { width: 46px; height: 100%; flex: none; display: flex; align-items: center; justify-content: center; padding-left: 2px; border-right: 1px solid #484848; color: #dcdcdc; background: #535353; }
.thumb { width: 48px; height: 48px; margin-left: 6px; border: 1px solid #353535; position: relative; display: flex; padding: 6px 0 0 7px; flex: none; }
.row:last-child .thumb { margin-top: 32px; border-bottom: 0; }
.marks { position: absolute; left: -4px; top: -3px; }
.check { width: 34px; height: 34px; position: relative; background: repeating-conic-gradient(#cfcfcf 0 25%, #fff 0 50%) 0 0 / 8px 8px; }
.line { position: absolute; left: 0; width: 100%; height: 1px; background: #9a9ed0; }
.badge { position: absolute; right: -1px; bottom: -1px; width: 21px; height: 22px; background: #555; border-top: 1px solid #353535; border-left: 1px solid #353535; display: flex; align-items: center; justify-content: center; color: #dcdcdc; }
.sel .badge { background: #5f5f5f; }
.name { margin-left: 15px; font-size: 15px; color: #e2e2e2; white-space: nowrap; word-spacing: 2.500px; }
.cn { font: 16px "Noto Sans CJK SC", sans-serif; letter-spacing: 2px; }
.pscroll { flex: 1; background: #4a4a4a; position: relative; display: flex; flex-direction: column; }
.pup { height: 25px; display: flex; justify-content: flex-end; align-items: center; }
.pthumb { height: 340px; width: 12px; margin-left: 3px; background: #646464; border-radius: 1px 0 0 1px; }
.pfoot { flex: 1; min-height: 0; display: flex; align-items: center; border-top: 2px solid #3f3f3f; overflow: hidden; padding: 7px 0 0 71px; gap: 21px; }
.fx { font: italic 20px "Liberation Serif", serif; color: #e0e0e0; width: 20px; line-height: 18px; margin: 0 -2px 0 2px; }
.trash { margin-left: 2px; }

.redbox { position: absolute; left: 1537px; top: 201px; width: 335px; height: 682px; border: 5.300px solid #ed1c24; pointer-events: none; }
```
